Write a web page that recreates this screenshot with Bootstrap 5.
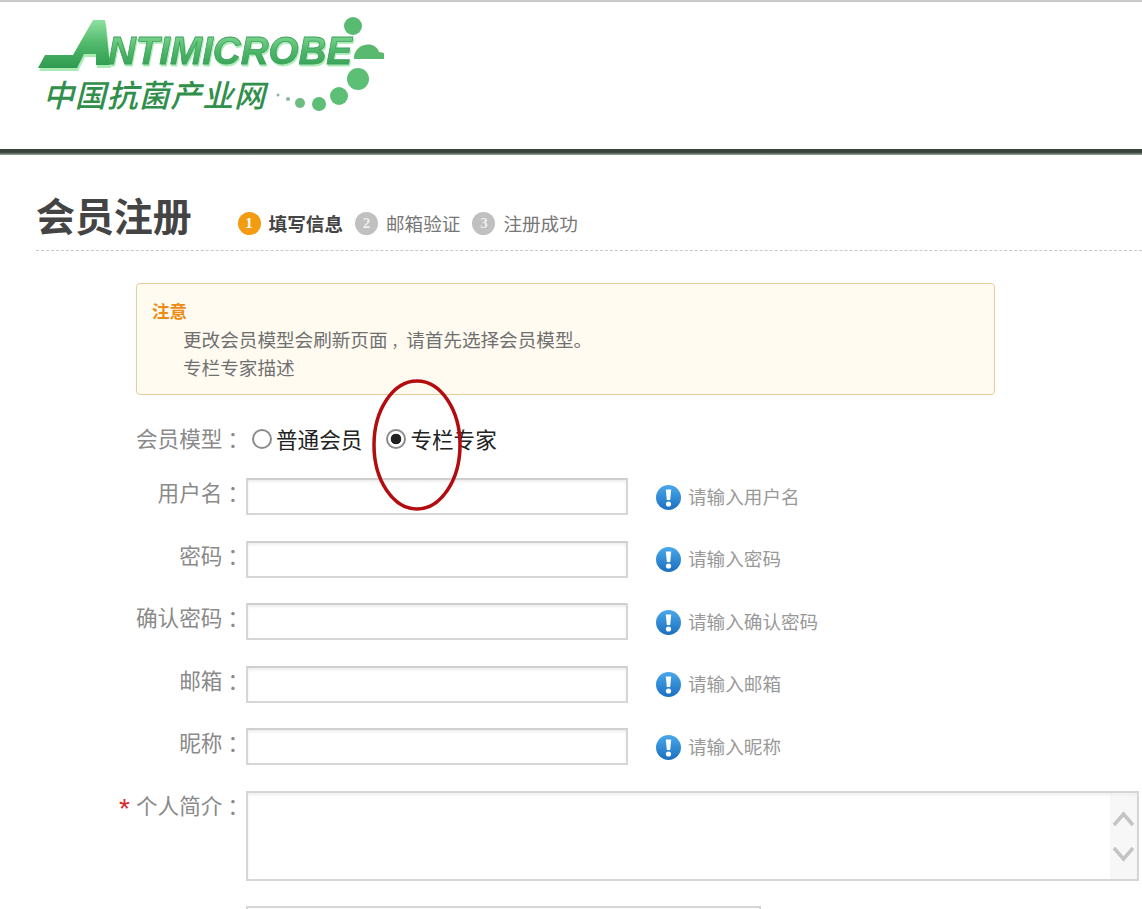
<!DOCTYPE html>
<html lang="zh-CN">
<head>
<meta charset="utf-8">
<title>会员注册</title>
<link rel="stylesheet" href="https://cdn.jsdelivr.net/npm/bootstrap@5.3.0/dist/css/bootstrap.min.css">
<style>
html,body{height:909px;overflow:hidden;background:#fff}
body{font-family:"Noto Sans CJK SC","Liberation Sans",sans-serif;font-size:18.6px;color:#888;position:relative}
.site-top{height:149px;border-top:2px solid #c9c9c9;padding-left:34px;padding-top:12px}
.site-rule{height:6px;background:linear-gradient(#3a443c 0,#3a443c 55%,#9aa59c 100%)}
.logo-mark{display:block;overflow:visible}
.logo-en{font-family:"Liberation Sans",sans-serif;font-weight:700;font-style:italic;stroke:#3f9f5c;stroke-width:.8px;filter:drop-shadow(1px 2px 0 #a9ebb5)}
.logo-cn{font-family:"Noto Sans CJK SC",sans-serif;font-weight:500;font-style:italic}
.title-bar{margin:25px 0 0 36px;height:71px;border-bottom:1px dashed #c8c8c8}
.page-title{font-size:39px;font-weight:700;color:#444;margin:6px 46px 0 0;line-height:56px;letter-spacing:-.1px}
.step-list{margin-top:31px;gap:12px;color:#777;line-height:24px}
.step-item{gap:8px}
.step-on{color:#444;font-weight:700}
.step-dot{width:23px;height:23px;border-radius:50%;background:#c0c0c0;color:#eee;font-size:15px;font-weight:700;line-height:23px;text-align:center;font-family:"Liberation Serif",serif}
.step-on .step-dot{background:#f39c12;color:#fff}
.notice-box{margin:32px 0 0 136px;width:859px;height:112px;background:#fffbf0;border:1px solid #e8cd9a;border-radius:4px;padding:13px 15px 0;line-height:28px;color:#707070}
.notice-title{color:#ec8c14;font-weight:700;font-size:17.5px}
.notice-body{padding-left:31px}
.mid-comma{display:inline-block;width:18.6px;font-size:14.6px;line-height:1;text-align:right}
.mid-mark{margin-left:5px;margin-right:-5px}
.reg-form{margin-top:25px;gap:25.5px}
.field-row{height:37px}
.field-label{width:244px;text-align:right;flex:none;line-height:28px;white-space:nowrap;font-size:21.6px;color:#8a8a8a}
.field-label b{color:#d9262c;font-weight:400;margin-right:6px;font-family:"Liberation Sans",sans-serif;font-size:28px;line-height:20px;vertical-align:-4px}
.field-input{width:382px;height:37px;margin-left:2px;flex:none;border:2px solid #d6d6d6;border-top-color:#cfcfcf;background:#fff;box-shadow:inset 0 2px 3px #eee;outline:0;padding:0 6px}
.field-hint{margin-left:28px;gap:7px;height:37px;padding-bottom:2px;color:#999;line-height:30px}
.hint-icon{width:25px;height:25px;flex:none;margin-top:3px}
.radio-row{height:36px;margin-bottom:-3.5px}
.radio-set{margin-left:8px;color:#222;gap:24px;font-size:21.6px;padding-top:2px}
.radio-pick{gap:4px;line-height:30px;margin:0}
.radio-pick input{appearance:none;width:20px;height:20px;margin:0;border:2px solid #8c8c8c;border-radius:50%;background:#fff;flex:none}
.radio-pick input:checked{background:radial-gradient(circle,#222 0,#222 5px,#fff 5.6px)}
.text-block{height:90px}
.text-area{width:893px;height:90px;margin-left:2px;flex:none;border:2px solid #d6d6d6;background:linear-gradient(90deg,#fff 0,#fff 862px,#f7f7f7 862px);box-shadow:inset 0 2px 3px #eee;position:relative;overflow:hidden;display:block}
.scroll-arrows{position:absolute;right:0;top:0;width:27px;height:86px;pointer-events:none}
.short-input{width:515px;height:37px;margin-left:246px;border:2px solid #d6d6d6;background:#fff;margin-top:-.5px}
.red-ring{position:absolute;left:370px;top:378px;pointer-events:none}
</style>
</head>
<body>
<header class="site-top">
<svg class="logo-mark" width="356" height="106" viewBox="0 0 356 106" role="img" aria-label="Antimicrobe 中国抗菌产业网">
<defs>
<linearGradient id="lg" x1="0" y1="0" x2="0" y2="1"><stop offset="0" stop-color="#8fe0a0"/><stop offset=".5" stop-color="#4fb86a"/><stop offset="1" stop-color="#2f9a50"/></linearGradient>
</defs>
<path d="M5 57 L12 44 H40 L60 9 H72 L77 54 H63 L63 43 H51 L44 57Z" fill="#a9ebb5"/>
<path d="M4 54 L11 41 H39 L59 6 H71 L76 51 H62 L62 40 H50 L43 54Z" fill="url(#lg)"/>
<path d="M320 42 C323 28 342 27 345 38 L350 39 V45 H320Z" fill="#59b96f"/>
<text class="logo-en" x="74" y="50" font-size="39" textLength="244" lengthAdjust="spacingAndGlyphs" fill="url(#lg)">NTIMICROBE</text>
<circle cx="319" cy="12" r="9" fill="#58bb71"/>
<circle cx="324" cy="65" r="11" fill="#5cbf75"/>
<circle cx="305" cy="82" r="9" fill="#5cbf75"/>
<circle cx="285" cy="90" r="7" fill="#5cbf75"/>
<circle cx="266" cy="89" r="5" fill="#6dbd83"/>
<circle cx="254" cy="85" r="2" fill="#8ab79a"/>
<circle cx="244" cy="81" r="1.500" fill="#8ab79a"/>
<text class="logo-cn" x="9" y="93" font-size="31" textLength="222" fill="#2f8f4b">中国抗菌产业网</text>
</svg>
</header>
<div class="site-rule"></div>
<div class="title-bar d-flex align-items-start">
<h1 class="page-title">会员注册</h1>
<div class="step-list d-flex">
<div class="step-item step-on d-flex align-items-center"><span class="step-dot">1</span><span>填写信息</span></div>
<div class="step-item d-flex align-items-center"><span class="step-dot">2</span><span>邮箱验证</span></div>
<div class="step-item d-flex align-items-center"><span class="step-dot">3</span><span>注册成功</span></div>
</div>
</div>
<div class="notice-box">
<div class="notice-title">注意</div>
<div class="notice-body">更改会员模型会刷新页面<span class="mid-comma">，</span>请首先选择会员模型。<br>专栏专家描述</div>
</div>
<form class="reg-form d-flex flex-column">
<div class="radio-row d-flex align-items-center">
<div class="field-label">会员模型<span class="mid-mark">：</span></div>
<div class="radio-set d-flex">
<label class="radio-pick d-flex align-items-center"><input type="radio" name="m"><span>普通会员</span></label>
<label class="radio-pick d-flex align-items-center"><input type="radio" name="m" checked><span>专栏专家</span></label>
</div>
</div>
<div class="field-row d-flex align-items-start"><div class="field-label">用户名<span class="mid-mark">：</span></div><input class="field-input" type="text"><div class="field-hint d-flex align-items-center"><svg class="hint-icon" viewBox="0 0 25 25"><use href="#hint"/></svg><span>请输入用户名</span></div></div>
<div class="field-row d-flex align-items-start"><div class="field-label">密码<span class="mid-mark">：</span></div><input class="field-input" type="text"><div class="field-hint d-flex align-items-center"><svg class="hint-icon" viewBox="0 0 25 25"><use href="#hint"/></svg><span>请输入密码</span></div></div>
<div class="field-row d-flex align-items-start"><div class="field-label">确认密码<span class="mid-mark">：</span></div><input class="field-input" type="text"><div class="field-hint d-flex align-items-center"><svg class="hint-icon" viewBox="0 0 25 25"><use href="#hint"/></svg><span>请输入确认密码</span></div></div>
<div class="field-row d-flex align-items-start"><div class="field-label">邮箱<span class="mid-mark">：</span></div><input class="field-input" type="text"><div class="field-hint d-flex align-items-center"><svg class="hint-icon" viewBox="0 0 25 25"><use href="#hint"/></svg><span>请输入邮箱</span></div></div>
<div class="field-row d-flex align-items-start"><div class="field-label">昵称<span class="mid-mark">：</span></div><input class="field-input" type="text"><div class="field-hint d-flex align-items-center"><svg class="hint-icon" viewBox="0 0 25 25"><use href="#hint"/></svg><span>请输入昵称</span></div></div>
<div class="text-block d-flex align-items-start"><div class="field-label"><b>*</b>个人简介<span class="mid-mark">：</span></div><div class="text-area"><svg class="scroll-arrows" viewBox="0 0 27 86"><path d="M4 32 L13.500 21 L23 32" fill="none" stroke="#c4c4c4" stroke-width="3.500"/><path d="M4 55 L13.500 66 L23 55" fill="none" stroke="#c4c4c4" stroke-width="3.500"/></svg></div></div>
<div class="short-input"></div>
</form>
<svg class="red-ring" width="95" height="135" viewBox="0 0 95 135"><ellipse cx="47" cy="67" rx="43" ry="64" fill="none" stroke="#b30c10" stroke-width="3.500"/></svg>
<svg width="0" height="0" class="position-absolute"><defs>
<linearGradient id="hg" x1="0" y1="0" x2="0" y2="1"><stop offset="0" stop-color="#4aa8ea"/><stop offset="1" stop-color="#1b6fc0"/></linearGradient>
<g id="hint"><circle cx="12.500" cy="12.500" r="12.500" fill="url(#hg)"/><path d="M9.800 4.500 H15.200 L14.200 15 H10.800Z" fill="#fff"/><circle cx="12.500" cy="19" r="2.600" fill="#fff"/></g>
</defs></svg>
<script src="https://cdn.jsdelivr.net/npm/bootstrap@5.3.0/dist/js/bootstrap.bundle.min.js"></script>
</body>
</html>
